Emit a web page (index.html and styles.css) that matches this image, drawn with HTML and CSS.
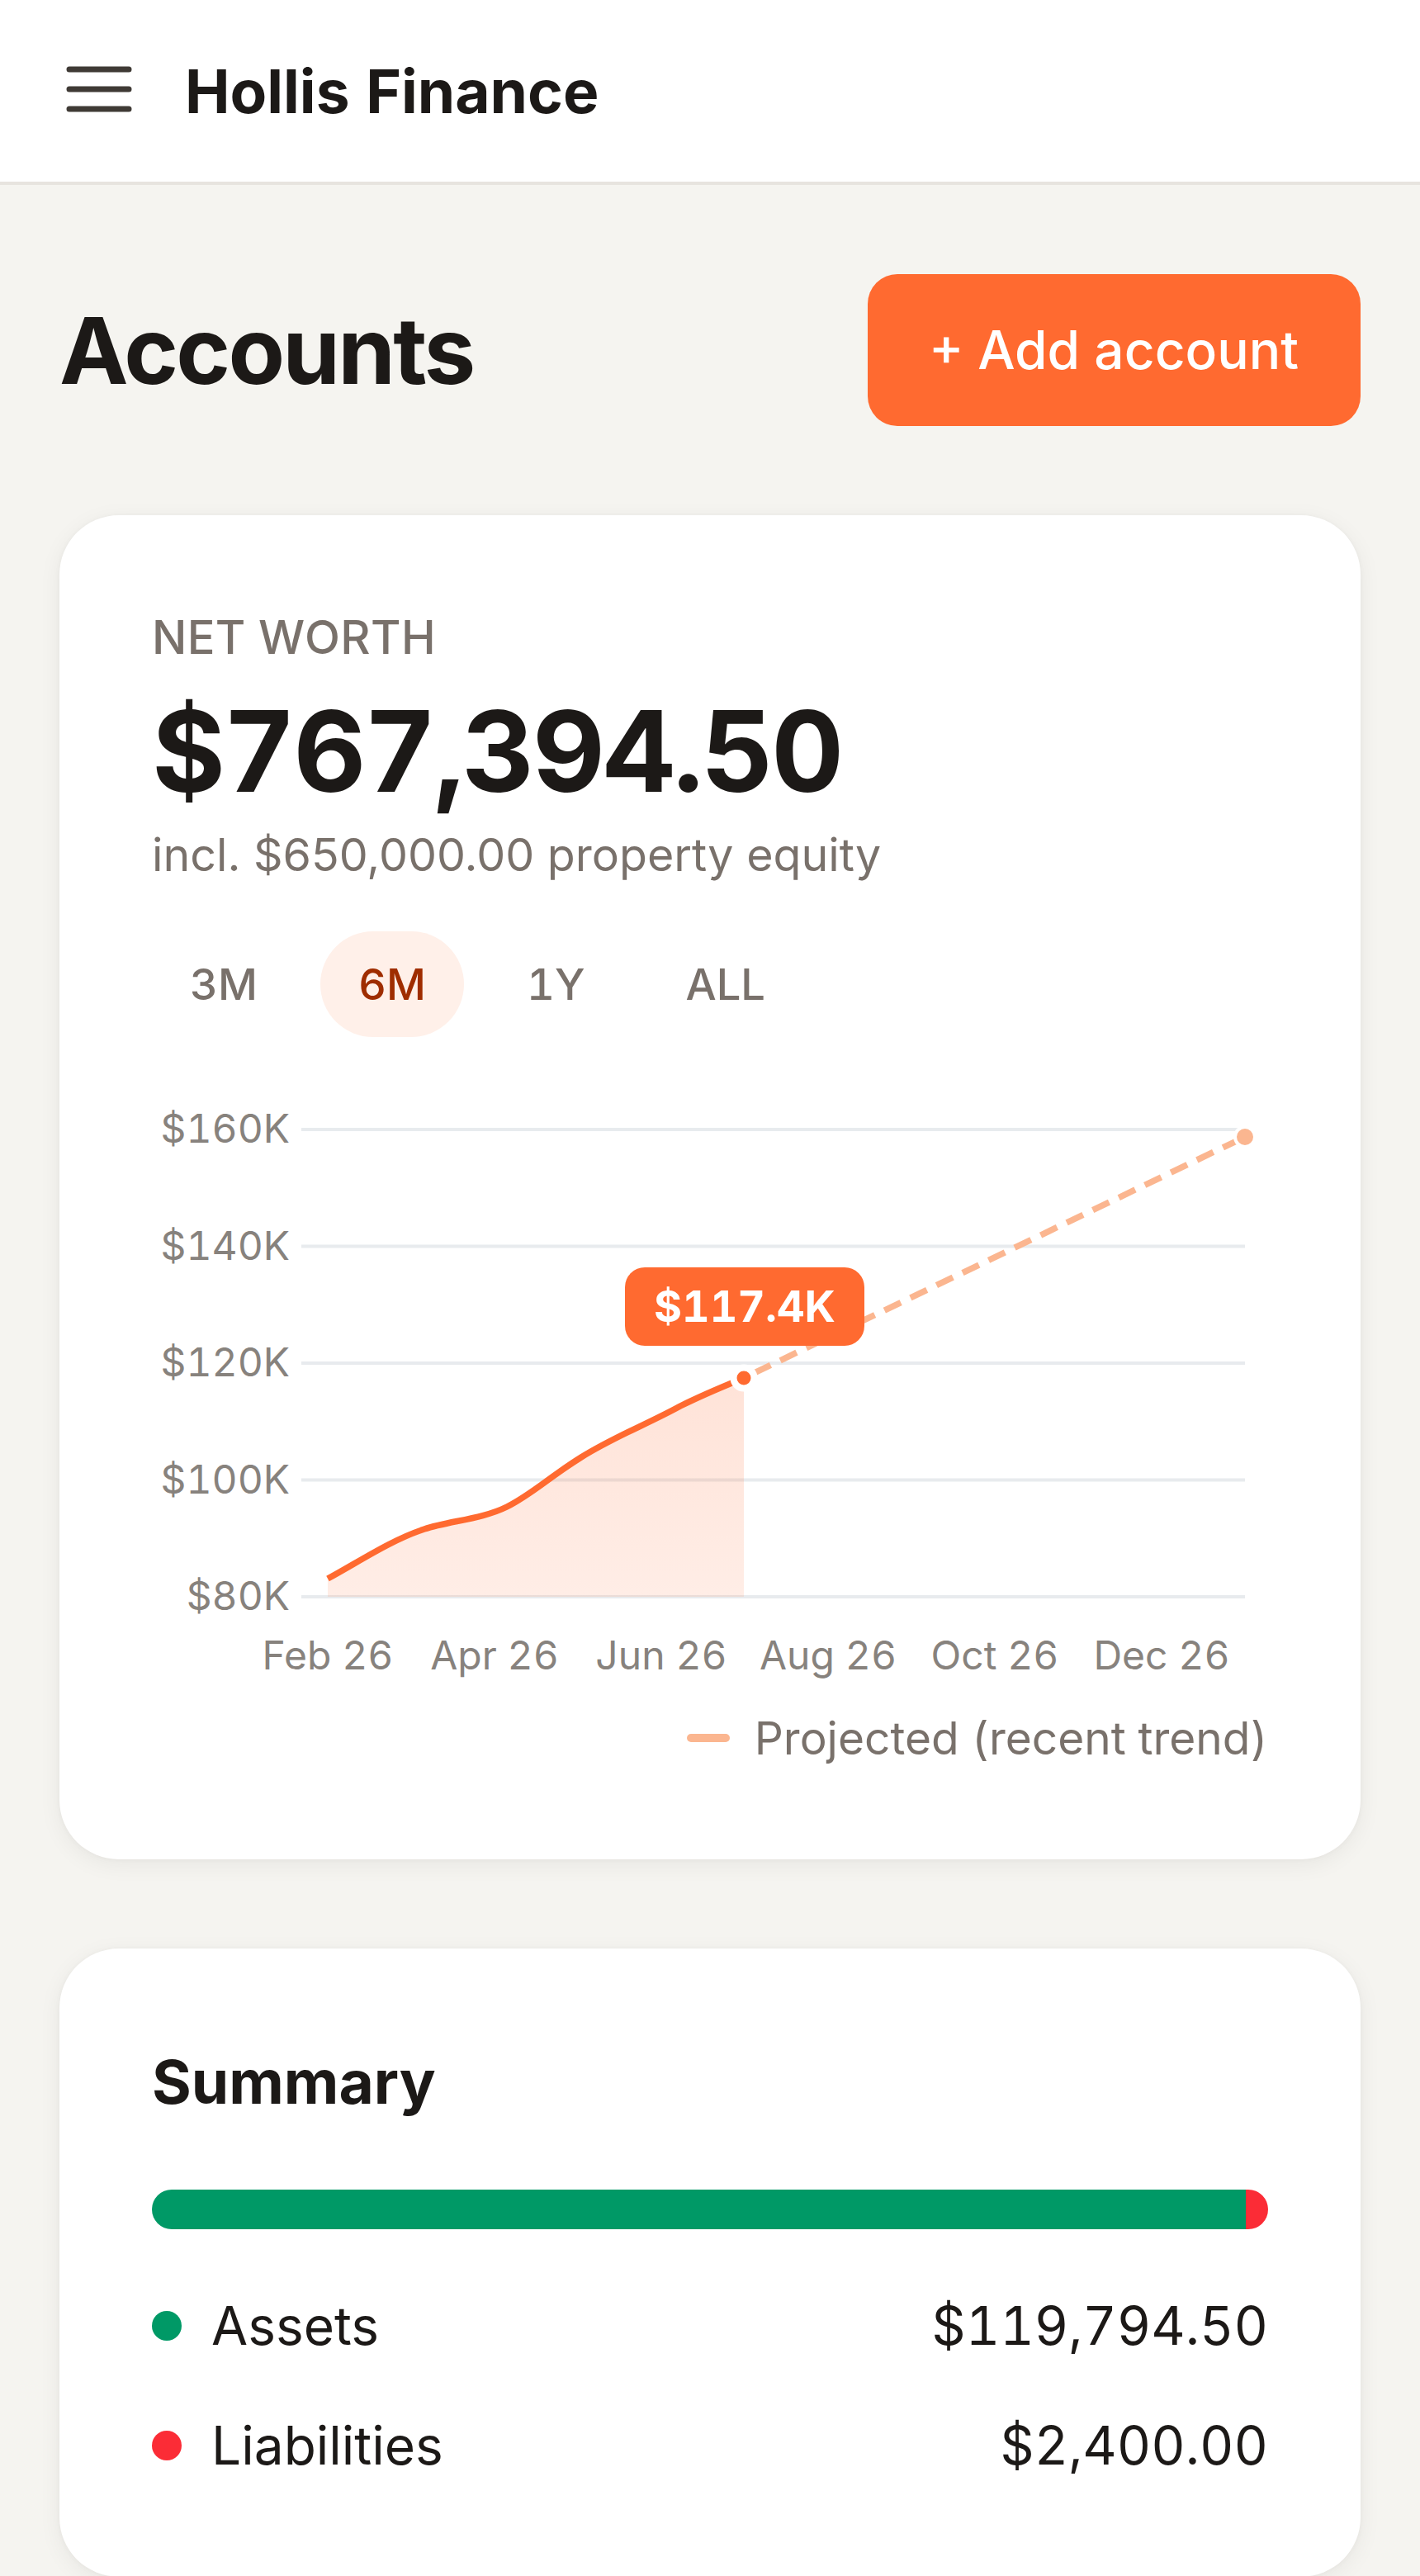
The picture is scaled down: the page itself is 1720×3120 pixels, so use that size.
FILE: index.html
```html
<!DOCTYPE html>
<html lang="en">
<head>
<meta charset="utf-8">
<title>Hollis Finance – Accounts</title>
<link rel="stylesheet" href="styles.css">
</head>
<body>
<header class="topbar">
  <button class="menu-btn" aria-label="Menu">
    <svg class="menu-icon" viewBox="0 0 80 56" width="80" height="56" aria-hidden="true">
      <path d="M4 4H76M4 28H76M4 52H76" fill="none" stroke="#3f3a35" stroke-width="7" stroke-linecap="round"/>
    </svg>
  </button>
  <span class="brand">Hollis Finance</span>
</header>

<main class="page">
  <div class="page-head">
    <h1 class="page-title">Accounts</h1>
    <button class="add-btn">+ Add account</button>
  </div>

  <section class="card networth">
    <div class="eyebrow">NET WORTH</div>
    <div class="big-amount">$767,394.50</div>
    <div class="sub-amount">incl. $650,000.00 property equity</div>

    <div class="tabs">
      <button class="tab">3M</button>
      <button class="tab tab-active">6M</button>
      <button class="tab">1Y</button>
      <button class="tab">ALL</button>
    </div>

    <svg class="chart" viewBox="0 0 1352 730" width="1352" height="730">
      <defs>
        <linearGradient id="areaFill" x1="0" y1="349" x2="0" y2="614" gradientUnits="userSpaceOnUse">
          <stop offset="0" stop-color="#ff6a30" stop-opacity="0.19"/>
          <stop offset="1" stop-color="#ff6a30" stop-opacity="0.12"/>
        </linearGradient>
      </defs>
      <g class="grid" stroke="#e8ebee" stroke-width="4">
        <line x1="181" y1="48" x2="1324" y2="48"/>
        <line x1="181" y1="189.5" x2="1324" y2="189.5"/>
        <line x1="181" y1="331" x2="1324" y2="331"/>
        <line x1="181" y1="472.5" x2="1324" y2="472.5"/>
        <line x1="181" y1="614" x2="1324" y2="614"/>
      </g>
      <g class="axis-y" text-anchor="end">
        <text x="167" y="64">$160K</text>
        <text x="167" y="205.5">$140K</text>
        <text x="167" y="347">$120K</text>
        <text x="167" y="488.5">$100K</text>
        <text x="167" y="630">$80K</text>
      </g>
      <g class="axis-x" text-anchor="middle">
        <text x="213" y="702">Feb 26</text>
        <text x="415" y="702">Apr 26</text>
        <text x="617" y="702">Jun 26</text>
        <text x="819" y="702">Aug 26</text>
        <text x="1021" y="702">Oct 26</text>
        <text x="1223" y="702">Dec 26</text>
      </g>
      <path d="M213,592 C250,572 290,545 330,532 C360,522 400,520 430,505 C460,490 480,470 520,445 C560,420 600,405 640,383 C670,368 700,356 717,349 L717,614 L213,614 Z" fill="url(#areaFill)"/>
      <path d="M717,349 L1324,57" fill="none" stroke="#fbb690" stroke-width="7.5" stroke-dasharray="22 13" stroke-dashoffset="-14"/>
      <path d="M213,592 C250,572 290,545 330,532 C360,522 400,520 430,505 C460,490 480,470 520,445 C560,420 600,405 640,383 C670,368 700,356 717,349" fill="none" stroke="#ff6a30" stroke-width="7.5" stroke-linejoin="round"/>
      <circle cx="1324" cy="57" r="12" fill="#fbb690" stroke="#ffffff" stroke-width="4"/>
      <circle cx="717" cy="349" r="12.5" fill="#ff6a30" stroke="#ffffff" stroke-width="8"/>
      <rect x="573" y="215" width="290" height="95" rx="24" fill="#ff6a30"/>
      <text class="tip-text" x="718" y="281" text-anchor="middle">$117.4K</text>
    </svg>

    <div class="legend">
      <span class="legend-swatch"></span>
      <span class="legend-label">Projected (recent trend)</span>
    </div>
  </section>

  <section class="card summary">
    <h2 class="summary-title">Summary</h2>
    <div class="ratio-bar">
      <span class="ratio-assets" style="flex-grow:119794.5"></span>
      <span class="ratio-liab" style="flex-grow:2400"></span>
    </div>
    <ul class="summary-rows">
      <li class="summary-row">
        <span class="dot dot-green"></span>
        <span class="row-label">Assets</span>
        <span class="row-value">$119,794.50</span>
      </li>
      <li class="summary-row">
        <span class="dot dot-red"></span>
        <span class="row-label">Liabilities</span>
        <span class="row-value">$2,400.00</span>
      </li>
    </ul>
  </section>
</main>
</body>
</html>
```

FILE: styles.css
```css
* {
  box-sizing: border-box;
}

html, body {
  margin: 0;
  padding: 0;
}

body {
  background: #f5f4f0;
  font-family: Inter, "Noto Sans", "Liberation Sans", sans-serif;
  font-variant-numeric: tabular-nums;
  color: #1c1917;
}

button {
  font-family: inherit;
  font-variant-numeric: inherit;
  border: 0;
  background: none;
  padding: 0;
  cursor: pointer;
}

/* ---------- top bar ---------- */
.topbar {
  height: 224px;
  background: #ffffff;
  border-bottom: 4px solid #e7e4df;
  display: flex;
  align-items: center;
  padding-left: 80px;
  gap: 64px;
}

.menu-btn {
  display: flex;
  width: 80px;
  height: 56px;
  margin-top: -4px;
}

.menu-icon {
  display: block;
}

.brand {
  font-size: 73px;
  font-weight: 700;
  letter-spacing: 0;
  line-height: 1;
  color: #1c1917;
}

/* ---------- page ---------- */
.page {
  padding: 108px 72px 0;
  display: flex;
  flex-direction: column;
  gap: 108px;
}

.page-head {
  display: flex;
  align-items: center;
  justify-content: space-between;
}

.page-title {
  margin: 0;
  font-size: 112px;
  font-weight: 700;
  letter-spacing: -0.025em;
  line-height: 1;
}

.add-btn {
  height: 184px;
  padding: 0 75px;
  border-radius: 36px;
  background: #ff6a30;
  color: #ffffff;
  font-size: 64px;
  font-weight: 500;
  line-height: 1;
}

/* ---------- cards ---------- */
.card {
  background: #ffffff;
  border-radius: 72px;
  box-shadow: 0 6px 28px rgba(41, 37, 36, 0.06), 0 1px 6px rgba(41, 37, 36, 0.04);
  padding: 108px 112px 111px;
}

.eyebrow {
  font-size: 56px;
  line-height: 80px;
  font-weight: 500;
  letter-spacing: 0.006em;
  color: #79716b;
}

.big-amount {
  margin-top: 26px;
  font-size: 136px;
  line-height: 144px;
  font-weight: 700;
  letter-spacing: -0.02em;
  color: #1c1917;
}

.sub-amount {
  margin-top: 13px;
  font-size: 55.5px;
  line-height: 80px;
  font-variant-numeric: normal;
  color: #79716b;
}

.tabs {
  margin-top: 53px;
  display: flex;
  gap: 30px;
}

.tab {
  height: 128px;
  padding: 0 46px;
  border-radius: 64px;
  font-size: 52.5px;
  font-weight: 500;
  line-height: 128px;
  color: #79716b;
}

.tab-active {
  background: #fff0e9;
  color: #9f2d00;
}

.chart {
  display: block;
  margin-top: 64px;
  overflow: visible;
}

.chart text {
  font-family: Inter, "Noto Sans", "Liberation Sans", sans-serif;
  font-variant-numeric: tabular-nums;
  font-size: 48px;
  fill: #87827d;
}

.chart .tip-text {
  font-size: 52px;
  font-weight: 700;
  fill: #ffffff;
}

.legend {
  margin-top: 19px;
  display: flex;
  justify-content: flex-end;
  align-items: center;
  gap: 30px;
  font-size: 55px;
  line-height: 72px;
  color: #79716b;
}

.legend-swatch {
  width: 52px;
  height: 10px;
  border-radius: 5px;
  background: #fbb690;
}

/* ---------- summary ---------- */
.summary {
  padding-top: 112px;
}

.summary-title {
  margin: 0;
  font-size: 73px;
  line-height: 100px;
  font-weight: 700;
  color: #1c1917;
}

.ratio-bar {
  margin-top: 80px;
  height: 48px;
  border-radius: 24px;
  overflow: hidden;
  display: flex;
}

.ratio-assets {
  flex-basis: 0;
  background: #009966;
}

.ratio-liab {
  flex-basis: 0;
  background: #fb2c36;
}

.summary-rows {
  list-style: none;
  margin: 69px 0 0;
  padding: 0;
  display: flex;
  flex-direction: column;
  gap: 49px;
}

.summary-row {
  display: flex;
  align-items: center;
  font-size: 64px;
  line-height: 96px;
  color: #1c1917;
}

.dot {
  width: 36px;
  height: 36px;
  border-radius: 50%;
  flex-shrink: 0;
}

.dot-green {
  background: #009966;
}

.dot-red {
  background: #fb2c36;
}

.row-label {
  margin-left: 36px;
}

.row-value {
  margin-left: auto;
}
```
